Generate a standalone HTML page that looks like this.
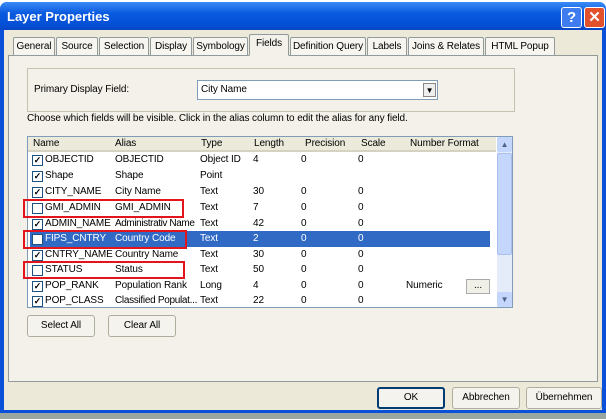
<!DOCTYPE html>
<html><head><style>
*{box-sizing:border-box;margin:0;padding:0}
body{width:606px;height:419px;overflow:hidden;background:#fff;font-family:"Liberation Sans",Arial,sans-serif;font-size:10px;letter-spacing:-0.1px;color:#000;position:relative;white-space:nowrap}
.a{position:absolute}
.win{left:0;top:2px;width:606px;height:412px;background:#0a50d8;border-radius:7px 7px 0 0}
.title{left:0;top:2px;width:606px;height:28px;background:linear-gradient(#3a8cf6,#0a5ae0 40%,#0450d6 80%,#0a46c4);border-radius:7px 7px 0 0}
.face{left:4px;top:30px;width:598px;height:380px;background:#ece9d8}
.btn{background:#f4f3ee;border:1px solid #003c74;border-radius:3px;text-align:center;line-height:19px}
.tb{top:37px;height:18px;line-height:17px;border:1px solid #919b9c;border-bottom:none;background:#f6f5f0;text-align:center;border-radius:2px 2px 0 0}
.cb{width:11px;height:11px;border:1px solid #1c5180;background:#fff;font-size:9px;line-height:9px;text-align:center;font-weight:bold;overflow:hidden}
.row{left:28px;width:468px;height:16px;line-height:16px}
.row span{position:absolute;top:0;white-space:nowrap}
.red{border:2px solid #e3141c}
</style></head><body>
<div class="a win"></div>
<div class="a title"></div>
<div class="a" style="left:7px;top:9px;color:#fff;font-weight:bold;font-size:13px;letter-spacing:0">Layer Properties</div>
<div class="a" style="left:561px;top:7px;width:21px;height:21px;border:1px solid #fff;border-radius:3px;background:#3e7cf0;color:#fff;font-weight:bold;font-size:15px;text-align:center;line-height:19px">?</div>
<div class="a" style="left:584px;top:7px;width:21px;height:21px;border:1px solid #fff;border-radius:3px;background:#e2502c;color:#fff;font-weight:bold;font-size:15px;text-align:center;line-height:19px">✕</div>
<div class="a face"></div>
<div class="a" style="left:8px;top:55px;width:590px;height:327px;border:1px solid #919b9c;background:#f3f1e9"></div>
<div class="a tb" style="left:13px;width:42px">General</div>
<div class="a tb" style="left:56px;width:42px">Source</div>
<div class="a tb" style="left:99px;width:50px">Selection</div>
<div class="a tb" style="left:150px;width:42px">Display</div>
<div class="a tb" style="left:193px;width:55px">Symbology</div>
<div class="a tb" style="left:249px;top:34px;height:22px;width:40px;background:#f3f1e9;border-bottom:1px solid #f3f1e9">Fields</div>
<div class="a tb" style="left:290px;width:76px">Definition Query</div>
<div class="a tb" style="left:367px;width:40px">Labels</div>
<div class="a tb" style="left:408px;width:76px">Joins &amp; Relates</div>
<div class="a tb" style="left:485px;width:70px">HTML Popup</div>
<div class="a" style="left:27px;top:68px;width:488px;height:44px;border:1px solid #c5c2b2"></div>
<div class="a" style="left:34px;top:84px">Primary Display Field:</div>
<div class="a" style="left:197px;top:80px;width:241px;height:20px;border:1px solid #7f9db9;background:#fff;padding:3px 3px">City Name</div>
<div class="a" style="left:423px;top:83px;width:13px;height:14px;border:1px solid #888;background:#eee;font-size:8px;text-align:center;line-height:13px">▼</div>
<div class="a" style="left:27px;top:113px">Choose which fields will be visible. Click in the alias column to edit the alias for any field.</div>
<div class="a" style="left:27px;top:136px;width:486px;height:172px;border:1px solid #7f9db9;background:#fff"></div>
<div class="a" style="left:28px;top:137px;width:468px;height:15px;background:#ebeadb;border-bottom:2px solid #d6d2c2"></div>
<div class="a row" style="top:136px">
<span style="left:5px">Name</span><span style="left:87px">Alias</span><span style="left:173px">Type</span><span style="left:226px">Length</span><span style="left:277px">Precision</span><span style="left:333px">Scale</span><span style="left:382px">Number Format</span></div>
<div class="a" style="left:497px;top:137px;width:15px;height:170px;background:#e4ecfa"></div>
<div class="a" style="left:497px;top:137px;width:15px;height:15px;background:#c4d6fb;border-radius:2px;font-size:8px;text-align:center;line-height:15px;color:#4d6185">▲</div>
<div class="a" style="left:497px;top:153px;width:15px;height:102px;background:#c4d6fb;border:1px solid #a9c0ee;border-radius:2px"></div>
<div class="a" style="left:497px;top:292px;width:15px;height:15px;background:#c4d6fb;border-radius:2px;font-size:8px;text-align:center;line-height:15px;color:#4d6185">▼</div>
<div class="a" style="left:30px;top:231px;width:460px;height:16px;background:#316ac5"></div>

<div class="a row" style="top:152px"><span style="left:4px;top:3px" class="cb">✓</span><span style="left:17px">OBJECTID</span><span style="left:87px">OBJECTID</span><span style="left:172px">Object ID</span><span style="left:225px">4</span><span style="left:273px">0</span><span style="left:330px">0</span></div>
<div class="a row" style="top:168px"><span style="left:4px;top:3px" class="cb">✓</span><span style="left:17px">Shape</span><span style="left:87px">Shape</span><span style="left:172px">Point</span></div>
<div class="a row" style="top:184px"><span style="left:4px;top:3px" class="cb">✓</span><span style="left:17px">CITY_NAME</span><span style="left:87px">City Name</span><span style="left:172px">Text</span><span style="left:225px">30</span><span style="left:273px">0</span><span style="left:330px">0</span></div>
<div class="a row" style="top:200px"><span style="left:4px;top:3px" class="cb"></span><span style="left:17px">GMI_ADMIN</span><span style="left:87px">GMI_ADMIN</span><span style="left:172px">Text</span><span style="left:225px">7</span><span style="left:273px">0</span><span style="left:330px">0</span></div>
<div class="a row" style="top:216px"><span style="left:4px;top:3px" class="cb">✓</span><span style="left:17px">ADMIN_NAME</span><span style="left:87px;letter-spacing:-0.4px">Administrativ Name</span><span style="left:172px">Text</span><span style="left:225px">42</span><span style="left:273px">0</span><span style="left:330px">0</span></div>
<div class="a row" style="top:231px;color:#fff"><span style="left:4px;top:3px" class="cb"></span><span style="left:17px">FIPS_CNTRY</span><span style="left:87px">Country Code</span><span style="left:172px">Text</span><span style="left:225px">2</span><span style="left:273px">0</span><span style="left:330px">0</span></div>
<div class="a row" style="top:247px"><span style="left:4px;top:3px" class="cb">✓</span><span style="left:17px">CNTRY_NAME</span><span style="left:87px">Country Name</span><span style="left:172px">Text</span><span style="left:225px">30</span><span style="left:273px">0</span><span style="left:330px">0</span></div>
<div class="a row" style="top:262px"><span style="left:4px;top:3px" class="cb"></span><span style="left:17px">STATUS</span><span style="left:87px">Status</span><span style="left:172px">Text</span><span style="left:225px">50</span><span style="left:273px">0</span><span style="left:330px">0</span></div>
<div class="a row" style="top:278px"><span style="left:4px;top:3px" class="cb">✓</span><span style="left:17px">POP_RANK</span><span style="left:87px">Population Rank</span><span style="left:172px">Long</span><span style="left:225px">4</span><span style="left:273px">0</span><span style="left:330px">0</span><span style="left:378px">Numeric</span></div>
<div class="a" style="left:466px;top:279px;width:24px;height:15px;background:#f0efe8;border:1px solid #aaa;text-align:center;line-height:11px">...</div>
<div class="a row" style="top:293px"><span style="left:4px;top:3px" class="cb">✓</span><span style="left:17px">POP_CLASS</span><span style="left:87px;letter-spacing:-0.3px">Classified Populat...</span><span style="left:172px">Text</span><span style="left:225px">22</span><span style="left:273px">0</span><span style="left:330px">0</span></div>

<div class="a red" style="left:23px;top:199px;width:161px;height:19px"></div>
<div class="a red" style="left:23px;top:230px;width:164px;height:19px"></div>
<div class="a red" style="left:23px;top:261px;width:162px;height:18px"></div>

<div class="a btn" style="left:27px;top:315px;width:68px;height:22px;border-color:#b0ad9f">Select All</div>
<div class="a btn" style="left:108px;top:315px;width:68px;height:22px;border-color:#b0ad9f">Clear All</div>
<div class="a btn" style="left:377px;top:387px;width:68px;height:22px;border-width:2px;line-height:18px">OK</div>
<div class="a btn" style="left:452px;top:387px;width:68px;height:22px;border-color:#b0ad9f">Abbrechen</div>
<div class="a btn" style="left:526px;top:387px;width:76px;height:22px;border-color:#b0ad9f">Übernehmen</div>
<div class="a" style="left:0;top:413px;width:606px;height:6px;background:#9aa7a0"></div>
</body></html>
